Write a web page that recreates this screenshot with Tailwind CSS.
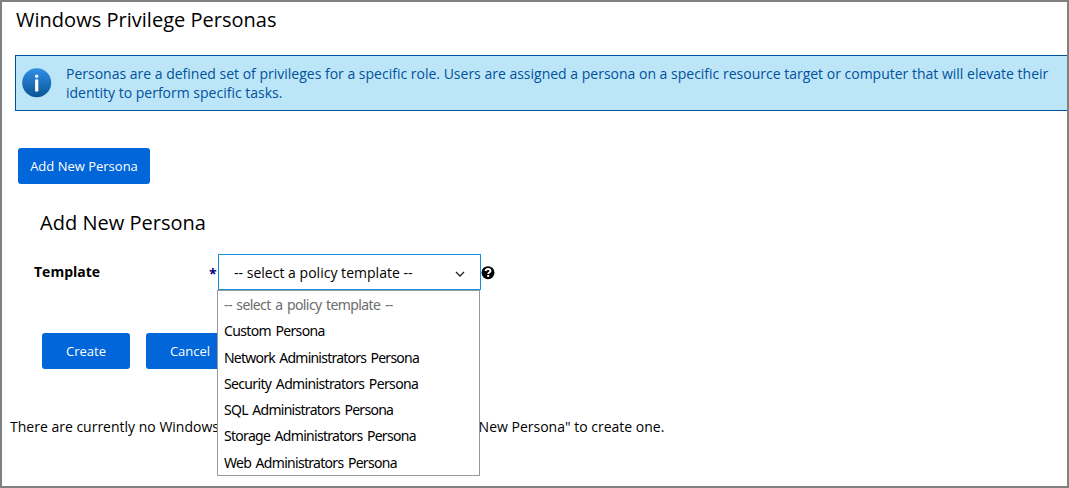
<!DOCTYPE html>
<html lang="en"><head><meta charset="utf-8"><title>Windows Privilege Personas</title><script src="https://cdn.jsdelivr.net/npm/@tailwindcss/browser@4"></script></head>
<body class="w-[1069px] h-[488px] overflow-hidden bg-white text-black font-['Open_Sans',sans-serif] text-[14px] leading-[19px]">
<main class="relative w-[1069px] h-[488px] overflow-hidden border-2 border-[#808080]">
<h1 class="ml-[14px] mt-[4px] text-[20px] leading-[28px] tracking-[0.02px] whitespace-nowrap">Windows Privilege Personas</h1>
<section class="mt-[21px] ml-[13px] -mr-[2px] h-[56px] bg-[#bde5f8] border border-[#00529b] text-[#00529b] flex pt-[8px] pl-[6px]">
<svg class="w-[30px] h-[30px] mt-[4px] shrink-0" viewBox="0 0 30 30"><defs><linearGradient id="g" x1="0" y1="0" x2="0" y2="1"><stop offset="0" stop-color="#2f8fe8"/><stop offset="1" stop-color="#0a5596"/></linearGradient></defs><circle cx="14.7" cy="14.7" r="14.5" fill="url(#g)"/><circle cx="14.7" cy="8.3" r="1.7" fill="#fff"/><rect x="13.1" y="11.3" width="3.2" height="12.3" rx="1.2" fill="#fff"/></svg>
<p class="ml-[14px] whitespace-nowrap">Personas are a defined set of privileges for a specific role. Users are assigned a persona on a specific resource target or computer that will elevate their<br>identity to perform specific tasks.</p>
</section>
<button class="block ml-[16px] mt-[37px] w-[132px] h-[36px] rounded-[3px] bg-[#0066d9] text-white text-[13px]">Add New Persona</button>
<h2 class="ml-[38px] mt-[25px] text-[20px] leading-[28px] tracking-[0.02px] whitespace-nowrap">Add New Persona</h2>
<div class="ml-[32px] mt-[17px] flex h-[36px]">
<label class="w-[175px] font-bold pt-[8px]">Template</label><span class="w-[9px] font-bold text-[#000080] pt-[10px]">*</span>
<div class="relative w-[263px] h-[36px] border border-[#1390df] flex items-center pl-[15px] pt-px tracking-[0.02px]">-- select a policy template --
<svg class="absolute left-[236px] top-[16px] w-[10px] h-[7px]" viewBox="0 0 10 7"><path d="M1 1l4 4 4-4" fill="none" stroke="#222" stroke-width="1.3"/></svg>
<div class="absolute z-10 left-[-2px] top-[35px] w-[263px] h-[186px] bg-white border border-[#999] pl-[6px] pt-[1px] text-[14px] leading-[26.25px] whitespace-nowrap font-['Noto_Sans',sans-serif] [word-spacing:1.5px]"><p class="text-[#6d6d6d] tracking-[-0.6px]">-- select a policy template --</p><p class="tracking-[-0.65px]">Custom Persona</p><p class="tracking-[-0.77px]">Network Administrators Persona</p><p class="tracking-[-0.65px]">Security Administrators Persona</p><p class="tracking-[-0.71px]">SQL Administrators Persona</p><p class="tracking-[-0.7px]">Storage Administrators Persona</p><p class="tracking-[-0.7px]">Web Administrators Persona</p></div></div>
<svg class="mt-[12px] w-[14px] h-[14px]" viewBox="0 0 14 14"><circle cx="7" cy="6.7" r="6.5"/><path d="M4.5 5C4.8 3.500 5.900 3 7 3c1.400 0 2.500.8 2.500 2 0 1.600-2.300 1.500-2.300 3" fill="none" stroke="#fff" stroke-width="1.900"/><rect x="6.200" y="9" width="2" height="1.900" fill="#fff"/></svg>
</div>
<div class="flex gap-[16px] ml-[40px] mt-[43px] text-white text-[13px]"><button class="w-[88px] h-[36px] rounded-[3px] bg-[#0066d9]">Create</button><button class="w-[88px] h-[36px] rounded-[3px] bg-[#0066d9]">Cancel</button></div>
<p class="ml-[8px] mt-[48px] whitespace-nowrap">There are currently no Windows <span class="tracking-[-0.08px]">Privilege Personas. Please click on "Add</span> New Persona" to create one.</p>
</main></body></html>
